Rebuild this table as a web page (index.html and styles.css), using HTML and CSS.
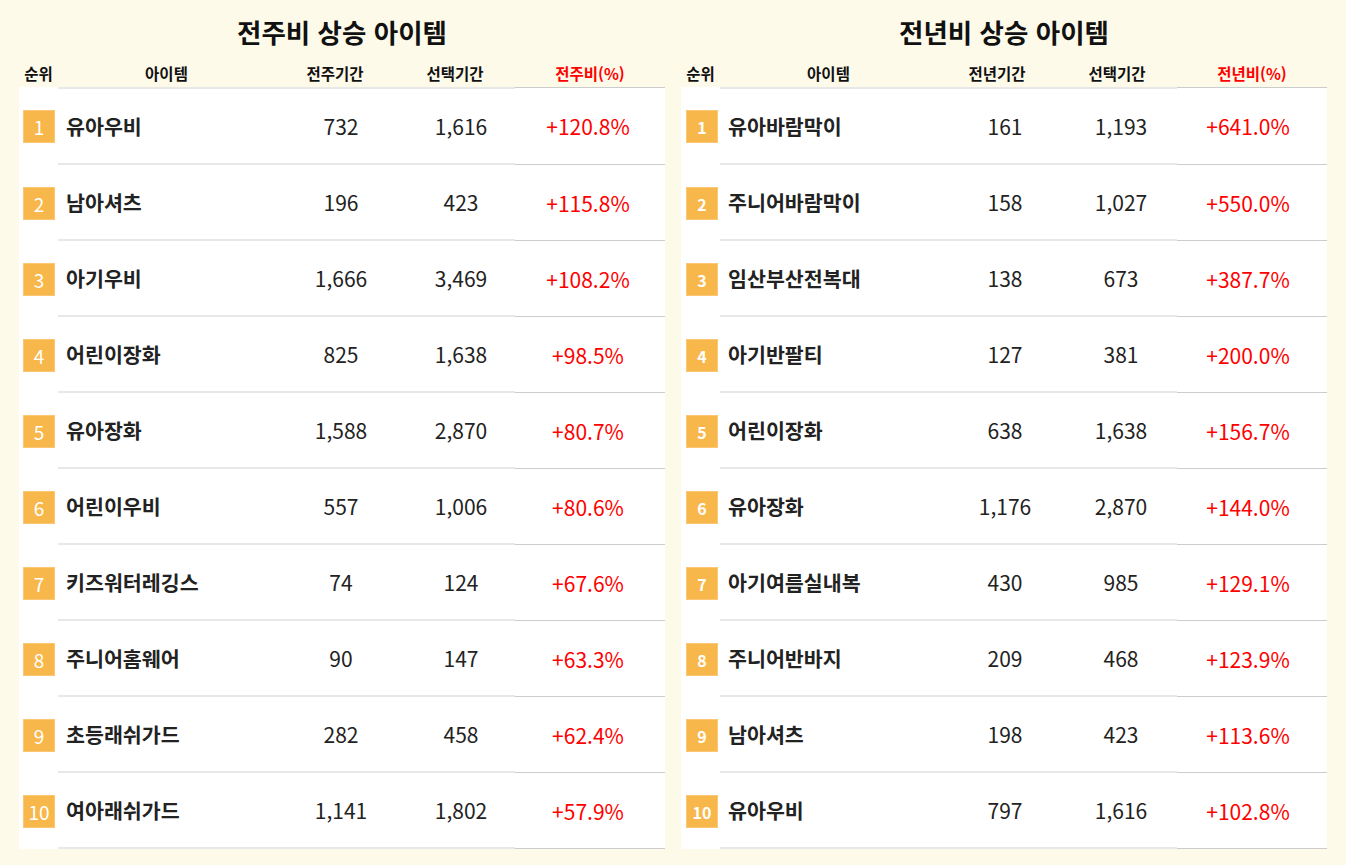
FILE: index.html
```html
<!DOCTYPE html>
<html lang="ko">
<head>
<meta charset="utf-8">
<title>상승 아이템</title>
<link rel="stylesheet" href="styles.css">
</head>
<body>
<div class="page">
  <section class="panel">
    <h2 class="title">전주비 상승 아이템</h2>
    <div class="row head">
      <div class="c-rank">순위</div>
      <div class="c-item">아이템</div>
      <div class="c-num">전주기간</div>
      <div class="c-num">선택기간</div>
      <div class="c-rate">전주비(%)</div>
    </div>
    <div class="body big">
      <div class="row"><div class="c-rank"><span class="badge">1</span></div><div class="c-item">유아우비</div><div class="c-num">732</div><div class="c-num">1,616</div><div class="c-rate">+120.8%</div></div>
      <div class="row"><div class="c-rank"><span class="badge">2</span></div><div class="c-item">남아셔츠</div><div class="c-num">196</div><div class="c-num">423</div><div class="c-rate">+115.8%</div></div>
      <div class="row"><div class="c-rank"><span class="badge">3</span></div><div class="c-item">아기우비</div><div class="c-num">1,666</div><div class="c-num">3,469</div><div class="c-rate">+108.2%</div></div>
      <div class="row"><div class="c-rank"><span class="badge">4</span></div><div class="c-item">어린이장화</div><div class="c-num">825</div><div class="c-num">1,638</div><div class="c-rate">+98.5%</div></div>
      <div class="row"><div class="c-rank"><span class="badge">5</span></div><div class="c-item">유아장화</div><div class="c-num">1,588</div><div class="c-num">2,870</div><div class="c-rate">+80.7%</div></div>
      <div class="row"><div class="c-rank"><span class="badge">6</span></div><div class="c-item">어린이우비</div><div class="c-num">557</div><div class="c-num">1,006</div><div class="c-rate">+80.6%</div></div>
      <div class="row"><div class="c-rank"><span class="badge">7</span></div><div class="c-item">키즈워터레깅스</div><div class="c-num">74</div><div class="c-num">124</div><div class="c-rate">+67.6%</div></div>
      <div class="row"><div class="c-rank"><span class="badge">8</span></div><div class="c-item">주니어홈웨어</div><div class="c-num">90</div><div class="c-num">147</div><div class="c-rate">+63.3%</div></div>
      <div class="row"><div class="c-rank"><span class="badge">9</span></div><div class="c-item">초등래쉬가드</div><div class="c-num">282</div><div class="c-num">458</div><div class="c-rate">+62.4%</div></div>
      <div class="row"><div class="c-rank"><span class="badge">10</span></div><div class="c-item">여아래쉬가드</div><div class="c-num">1,141</div><div class="c-num">1,802</div><div class="c-rate">+57.9%</div></div>
    </div>
  </section>
  <section class="panel">
    <h2 class="title">전년비 상승 아이템</h2>
    <div class="row head">
      <div class="c-rank">순위</div>
      <div class="c-item">아이템</div>
      <div class="c-num">전년기간</div>
      <div class="c-num">선택기간</div>
      <div class="c-rate">전년비(%)</div>
    </div>
    <div class="body small">
      <div class="row"><div class="c-rank"><span class="badge">1</span></div><div class="c-item">유아바람막이</div><div class="c-num">161</div><div class="c-num">1,193</div><div class="c-rate">+641.0%</div></div>
      <div class="row"><div class="c-rank"><span class="badge">2</span></div><div class="c-item">주니어바람막이</div><div class="c-num">158</div><div class="c-num">1,027</div><div class="c-rate">+550.0%</div></div>
      <div class="row"><div class="c-rank"><span class="badge">3</span></div><div class="c-item">임산부산전복대</div><div class="c-num">138</div><div class="c-num">673</div><div class="c-rate">+387.7%</div></div>
      <div class="row"><div class="c-rank"><span class="badge">4</span></div><div class="c-item">아기반팔티</div><div class="c-num">127</div><div class="c-num">381</div><div class="c-rate">+200.0%</div></div>
      <div class="row"><div class="c-rank"><span class="badge">5</span></div><div class="c-item">어린이장화</div><div class="c-num">638</div><div class="c-num">1,638</div><div class="c-rate">+156.7%</div></div>
      <div class="row"><div class="c-rank"><span class="badge">6</span></div><div class="c-item">유아장화</div><div class="c-num">1,176</div><div class="c-num">2,870</div><div class="c-rate">+144.0%</div></div>
      <div class="row"><div class="c-rank"><span class="badge">7</span></div><div class="c-item">아기여름실내복</div><div class="c-num">430</div><div class="c-num">985</div><div class="c-rate">+129.1%</div></div>
      <div class="row"><div class="c-rank"><span class="badge">8</span></div><div class="c-item">주니어반바지</div><div class="c-num">209</div><div class="c-num">468</div><div class="c-rate">+123.9%</div></div>
      <div class="row"><div class="c-rank"><span class="badge">9</span></div><div class="c-item">남아셔츠</div><div class="c-num">198</div><div class="c-num">423</div><div class="c-rate">+113.6%</div></div>
      <div class="row"><div class="c-rank"><span class="badge">10</span></div><div class="c-item">유아우비</div><div class="c-num">797</div><div class="c-num">1,616</div><div class="c-rate">+102.8%</div></div>
    </div>
  </section>
</div>
</body>
</html>
```

FILE: styles.css
```css
* { box-sizing: border-box; }
html, body {
  margin: 0;
  padding: 0;
  background: #fefae9;
}
body {
  font-family: "Noto Sans CJK KR", "Noto Sans", sans-serif;
  color: #222;
}
.page {
  display: flex;
  gap: 16px;
  padding: 0 19px;
  width: 1346px;
  height: 865px;
}
.panel {
  width: 646px;
}
.title {
  margin: 0;
  height: 60px;
  padding-top: 12px;
  text-align: center;
  font-size: 26.5px;
  line-height: 40px;
  font-weight: 700;
  color: #111;
}
.row {
  display: grid;
  grid-template-columns: 39px 217px 120px 120px 150px;
  height: 76px;
  align-items: stretch;
}
.row > div {
  display: flex;
  align-items: center;
}
.head {
  height: 27px;
  font-size: 15.5px;
  font-weight: 700;
  color: #111;
}
.head > div { justify-content: center; padding-bottom: 1px; }
.head .c-rate { color: #ff0000; font-weight: 700; }
.body {
  background: #fff;
}
.body .row > .c-item,
.body .row > .c-num {
  border-bottom: 2px solid #e8e8e8;
}
.body .row > .c-rate {
  border-bottom: 1px solid #cccccc;
}
.body .row:first-child > .c-item,
.body .row:first-child > .c-num {
  border-top: 2px solid #e8e8e8;
}
.body .row:first-child > .c-rate {
  border-top: 1px solid #cccccc;
}
.body .row { height: 76px; }
.body .row:first-child { height: 78px; }
.body .c-rank {
  padding-left: 4px;
}
.badge {
  display: flex;
  align-items: center;
  justify-content: center;
  width: 32px;
  height: 33px;
  background: #f8b74a;
  border: 1px solid #fbc775;
  color: #fff;
}
.big .badge {
  font-size: 19px;
  font-weight: 400;
}
.small .badge {
  font-size: 16px;
  font-weight: 700;
  padding-top: 1px;
}
.small .c-rank { padding-left: 5px; }
.body .c-item {
  padding-left: 8px;
  font-size: 20.6px;
  font-weight: 700;
  color: #222;
}
.body .c-num {
  justify-content: center;
  padding-left: 12px;
  font-size: 21px;
  font-weight: 400;
  color: #222;
}
.small .c-num:nth-child(3) { padding-left: 16px; }
.small .c-num:nth-child(4) { padding-left: 8px; }
.body .c-rate {
  justify-content: center;
  padding-right: 4px;
  font-size: 21px;
  font-weight: 400;
  color: #ff0000;
}
.small .c-rate { padding-right: 8px; }
```
